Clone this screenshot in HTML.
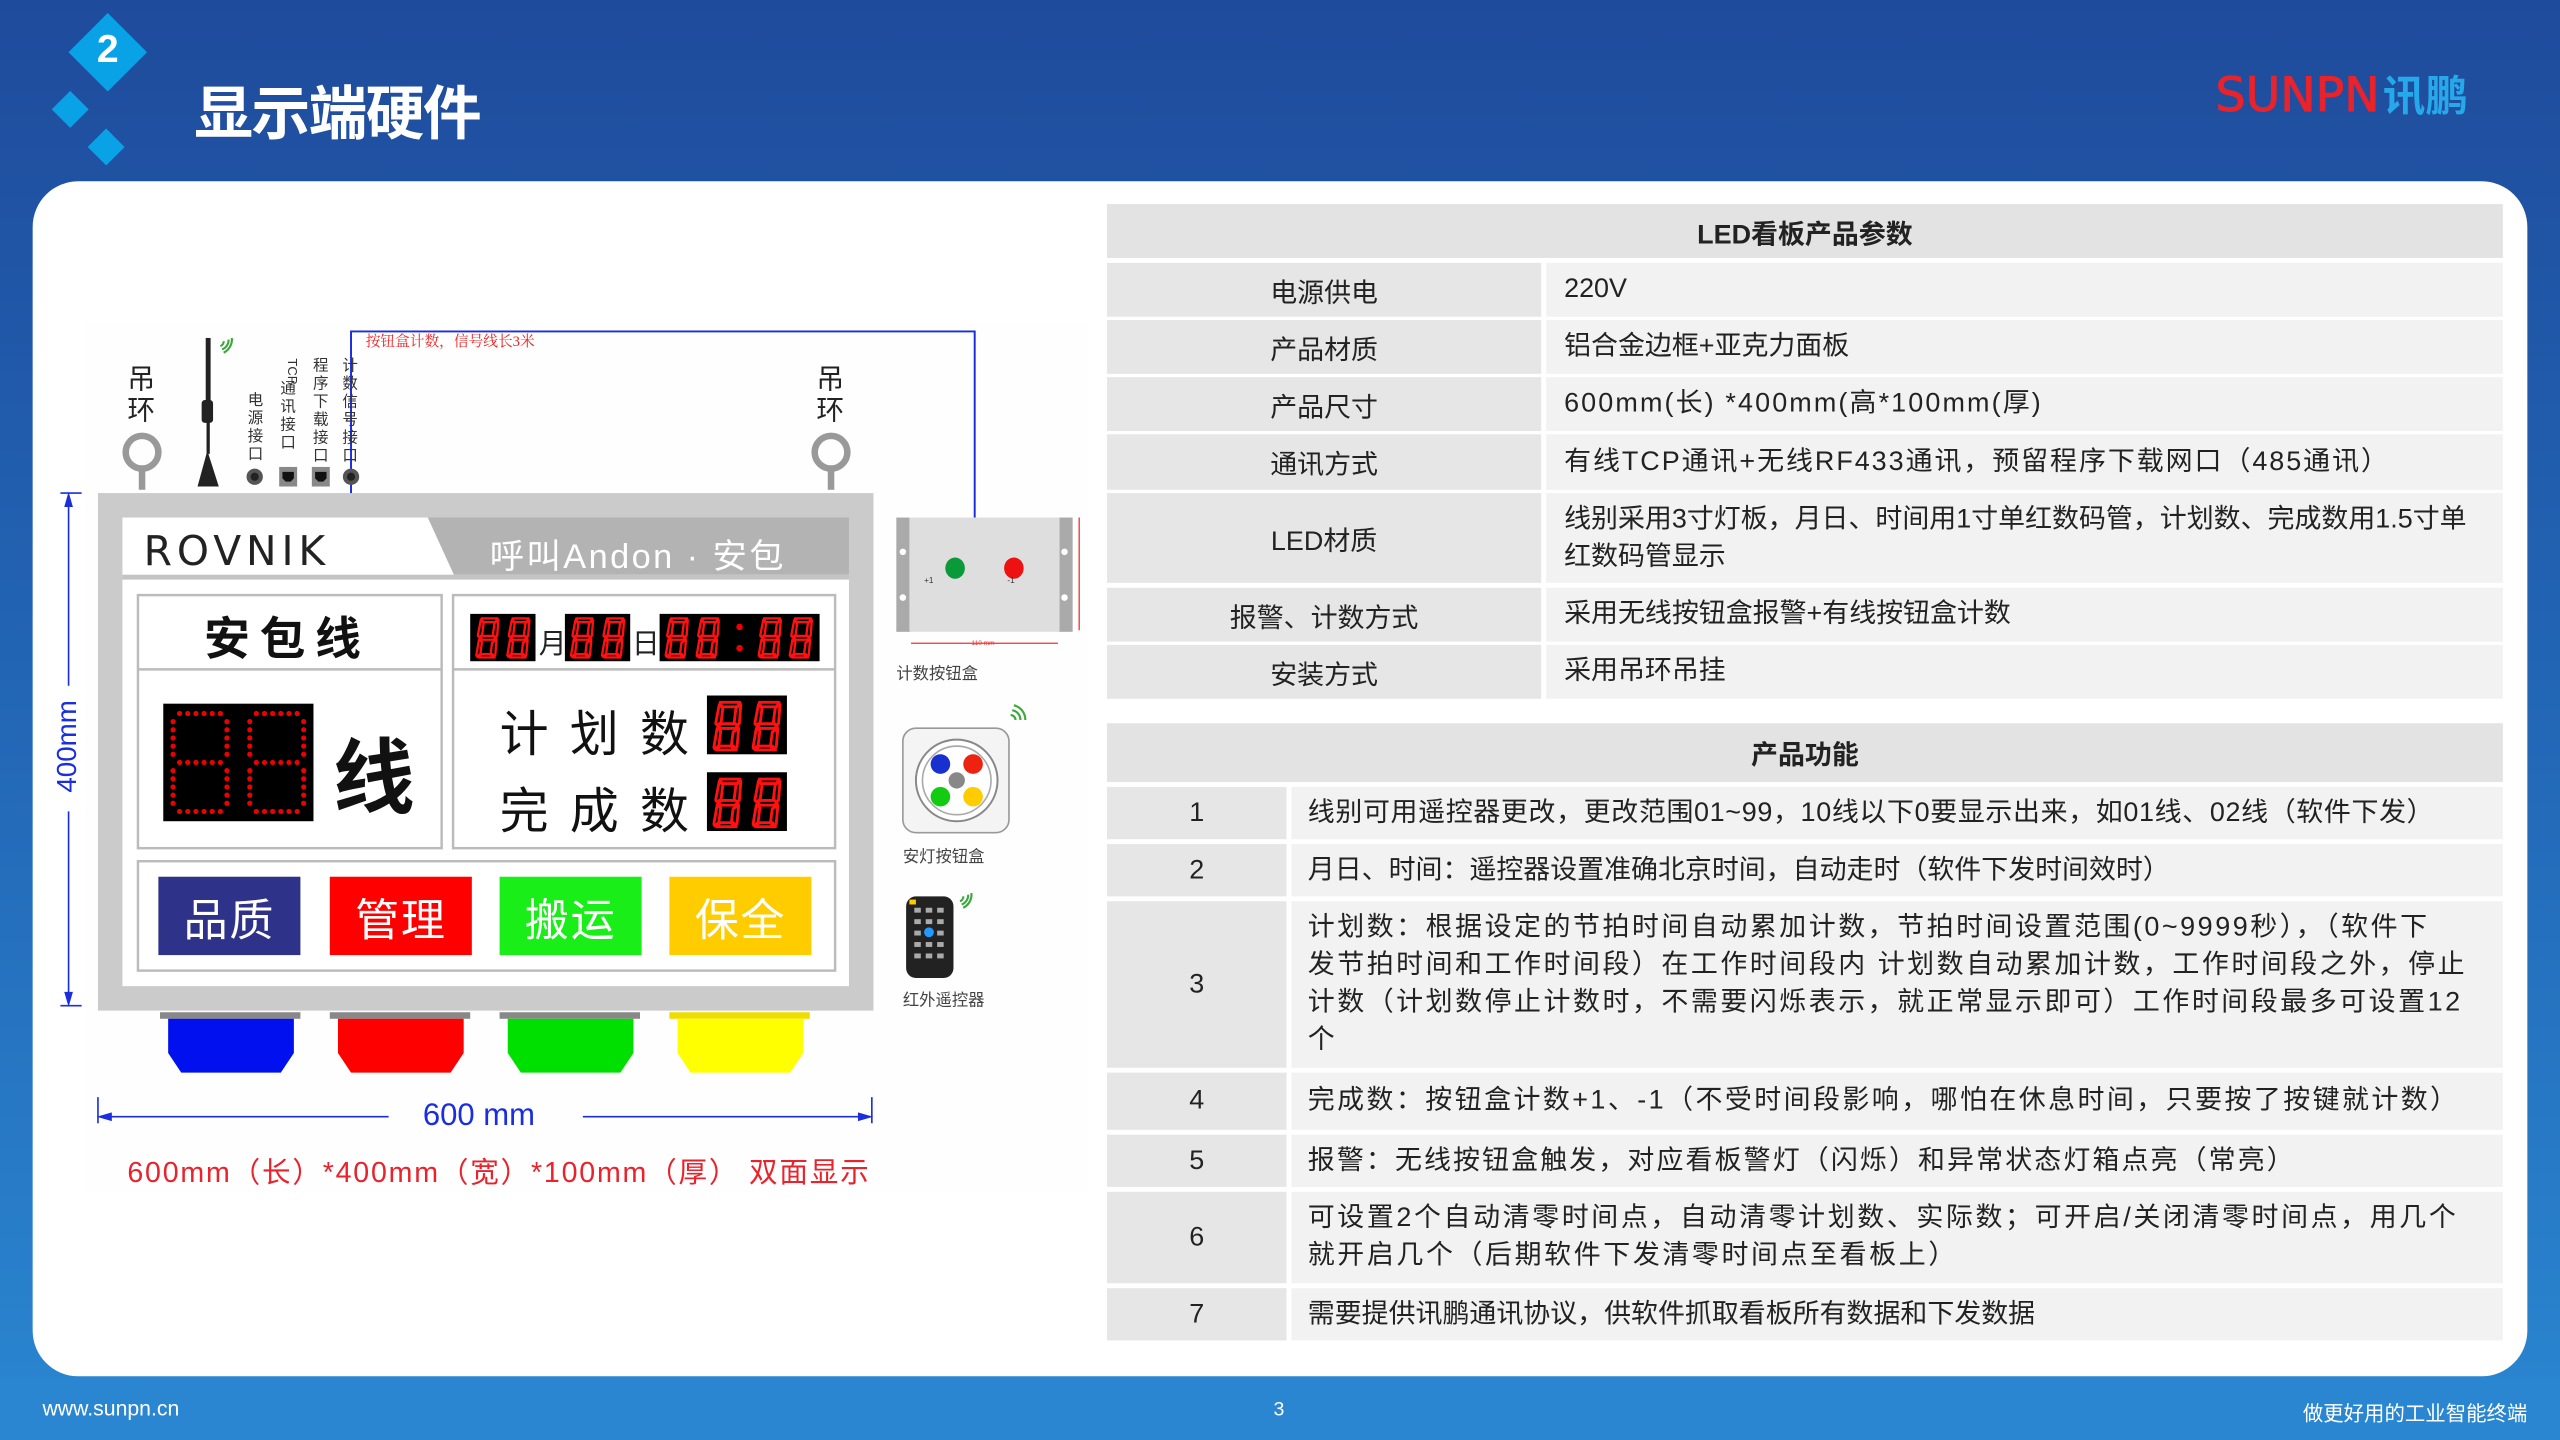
<!DOCTYPE html>
<html><head><meta charset="utf-8"><style>
*{margin:0;padding:0;box-sizing:border-box}
html,body{width:2560px;height:1440px;overflow:hidden;background:#2a86d0}
#w{position:absolute;left:0;top:0;width:1568px;height:882px;transform:scale(1.632653);transform-origin:0 0;font-family:"Liberation Sans","Noto Sans CJK SC",sans-serif;background:linear-gradient(180deg,#1f4b9c 0%,#2264b4 45%,#2a86d0 100%)}
.a{position:absolute}
.card{left:20px;top:111px;width:1528px;height:732px;background:#fff;border-radius:28px}
.foot{left:0;top:843px;width:1568px;height:39px;background:#2a86d0}
.dia{background:#0aa2e6;transform:rotate(45deg)}
.tb{position:absolute;left:678px;width:855px;font-size:16.5px;color:#222}
.r{position:absolute;left:0;width:855px;display:flex}
.lc{background:#e6e6e6;display:flex;align-items:center;justify-content:center}
.vc{background:#f2f2f2;margin-left:3px;flex:1;display:flex;align-items:center;line-height:23px;white-space:nowrap}
.hd{background:#e3e3e3;font-weight:bold;justify-content:center;align-items:center;font-size:16.5px}
.vt{position:absolute;font-size:9.5px;color:#333;width:11px;line-height:11px;text-align:center}
.btn{position:absolute;top:537px;width:87px;height:48px;color:#fff;font-size:27px;display:flex;align-items:center;justify-content:center;letter-spacing:1px}
.lab{position:absolute;font-size:10px;color:#444}
</style></head><body><div id="w">
<svg width="0" height="0" style="position:absolute"><defs>
<symbol id="d" viewBox="0 0 20 30"><g fill="none" stroke="#f11" stroke-width="1.6" stroke-linejoin="round"><path d="M6 2h11l-1.5 2.5h-8.5z"/><path d="M5.5 3.2l2 2-1 8-2.2 1.5-0.8-1z"/><path d="M17.5 3.2l-0.8 10.5-1.3 1 -1.6-1.5 1-8z"/><path d="M4.8 15.2l2-1.3h7.4l1.8 1.3-2 1.3h-7.4z"/><path d="M4.3 16.5l2 1.5-1 8-2.3 2-0.5-1z"/><path d="M16.3 16.5l-0.9 10.5-1.7 1-1.5-1.5 1-8z"/><path d="M4 28.5l2-2.2h7.5l1.5 2.2z"/></g></symbol>
</defs></svg>
<div class="a card"></div>
<div class="a foot"></div>
<div class="a dia" style="left:49px;top:15px;width:34px;height:34px"></div>
<div class="a" style="top:17px;color:#fff;font-weight:bold;font-size:24px;left:49px;width:34px;text-align:center">2</div>
<div class="a dia" style="left:35px;top:59px;width:16px;height:16px"></div>
<div class="a dia" style="left:57px;top:82px;width:16px;height:16px"></div>
<div class="a" style="left:119px;top:41px;color:#fff;font-size:36px;font-weight:bold;letter-spacing:-1px">显示端硬件</div>
<div class="a" style="left:1357px;top:41px;font-size:29px;line-height:34px;font-family:'DejaVu Sans','Liberation Sans',sans-serif;color:#e8232c;-webkit-text-stroke:0.6px #e8232c">SUNPN<span style="color:#26a9ea;font-family:'Noto Sans CJK SC',sans-serif;font-size:26px;font-weight:bold;-webkit-text-stroke:0;margin-left:2px">讯鹏</span></div>
<div class="a" style="left:26px;top:855px;color:#fff;font-size:13px">www.sunpn.cn</div>
<div class="a" style="left:780px;top:856px;color:#fff;font-size:12px">3</div>
<div class="a" style="left:1400px;top:855px;width:148px;text-align:right;color:#fff;font-size:12.5px">做更好用的工业智能终端</div>

<div class="tb" style="top:0">
<div class="r hd" style="top:125px;height:33px">LED看板产品参数</div>
<div class="r" style="top:161px;height:33px"><div class="lc" style="width:266px">电源供电</div><div class="vc" style="padding-left:11px">220V</div></div>
<div class="r" style="top:196px;height:33px"><div class="lc" style="width:266px">产品材质</div><div class="vc" style="padding-left:11px">铝合金边框+亚克力面板</div></div>
<div class="r" style="top:231px;height:33px"><div class="lc" style="width:266px">产品尺寸</div><div class="vc" style="padding-left:11px;letter-spacing:1.3px">600mm(长) *400mm(高*100mm(厚)</div></div>
<div class="r" style="top:266px;height:34px"><div class="lc" style="width:266px">通讯方式</div><div class="vc" style="padding-left:11px;letter-spacing:1.2px">有线TCP通讯+无线RF433通讯，预留程序下载网口（485通讯）</div></div>
<div class="r" style="top:302px;height:55px"><div class="lc" style="width:266px">LED材质</div><div class="vc" style="padding-left:11px">线别采用3寸灯板，月日、时间用1寸单红数码管，计划数、完成数用1.5寸单<br>红数码管显示</div></div>
<div class="r" style="top:360px;height:33px"><div class="lc" style="width:266px">报警、计数方式</div><div class="vc" style="padding-left:11px">采用无线按钮盒报警+有线按钮盒计数</div></div>
<div class="r" style="top:395px;height:33px"><div class="lc" style="width:266px">安装方式</div><div class="vc" style="padding-left:11px">采用吊环吊挂</div></div>
<div class="r hd" style="top:443px;height:36px">产品功能</div>
<div class="r" style="top:482px;height:32px"><div class="lc" style="width:110px">1</div><div class="vc" style="padding-left:10px;letter-spacing:0.4px">线别可用遥控器更改，更改范围01~99，10线以下0要显示出来，如01线、02线（软件下发）</div></div>
<div class="r" style="top:517px;height:32px"><div class="lc" style="width:110px">2</div><div class="vc" style="padding-left:10px">月日、时间：遥控器设置准确北京时间，自动走时（软件下发时间效时）</div></div>
<div class="r" style="top:552px;height:102px"><div class="lc" style="width:110px">3</div><div class="vc" style="padding-left:10px;letter-spacing:1.55px"><div>计划数：根据设定的节拍时间自动累加计数，节拍时间设置范围(0~9999秒），（软件下<br>发节拍时间和工作时间段）在工作时间段内 计划数自动累加计数，工作时间段之外，停止<br>计数（计划数停止计数时，不需要闪烁表示，就正常显示即可）工作时间段最多可设置12<br>个</div></div></div>
<div class="r" style="top:657px;height:35px"><div class="lc" style="width:110px">4</div><div class="vc" style="padding-left:10px;letter-spacing:1.5px">完成数：按钮盒计数+1、-1（不受时间段影响，哪怕在休息时间，只要按了按键就计数）</div></div>
<div class="r" style="top:695px;height:32px"><div class="lc" style="width:110px">5</div><div class="vc" style="padding-left:10px;letter-spacing:1.3px">报警：无线按钮盒触发，对应看板警灯（闪烁）和异常状态灯箱点亮（常亮）</div></div>
<div class="r" style="top:730px;height:56px"><div class="lc" style="width:110px">6</div><div class="vc" style="padding-left:10px;letter-spacing:1.6px"><div>可设置2个自动清零时间点，自动清零计划数、实际数；可开启/关闭清零时间点，用几个<br>就开启几个（后期软件下发清零时间点至看板上）</div></div></div>
<div class="r" style="top:789px;height:32px"><div class="lc" style="width:110px">7</div><div class="vc" style="padding-left:10px">需要提供讯鹏通讯协议，供软件抓取看板所有数据和下发数据</div></div>
</div>

<div class="a" style="left:52px;top:198px;width:614px;height:532px;background:#fefefe"></div>
<svg class="a" style="left:0;top:0" width="700" height="740">
<path d="M215 318V203H597V317" fill="none" stroke="#1a2ee0" stroke-width="1.2"/>
<circle cx="87" cy="277" r="10" fill="none" stroke="#999" stroke-width="4"/><rect x="85" y="286" width="4" height="14" fill="#999"/>
<circle cx="509" cy="277" r="10" fill="none" stroke="#999" stroke-width="4"/><rect x="507" y="286" width="4" height="14" fill="#999"/>
<rect x="126" y="207" width="3" height="40" fill="#222"/><rect x="123.5" y="245" width="7" height="14" rx="2" fill="#222"/><rect x="126.5" y="258" width="2" height="20" fill="#222"/><path d="M127 276 L121 298 H134 Z" fill="#222"/>
<g fill="none" stroke="#3aa83a" stroke-width="1.3"><path d="M135 212a3 3 0 0 0 2-3"/><path d="M136 214a6 6 0 0 0 4-6"/><path d="M137 216a9 9 0 0 0 5-9"/></g>
<circle cx="156" cy="292" r="5" fill="#555"/><circle cx="156" cy="292" r="2.5" fill="#222"/>
<rect x="171" y="286" width="11" height="12" fill="#888"/><path d="M173 289h7v4l-2 2h-3l-2-2z" fill="#111"/>
<rect x="191" y="286" width="11" height="12" fill="#888"/><path d="M193 289h7v4l-2 2h-3l-2-2z" fill="#111"/>
<circle cx="215" cy="292" r="5" fill="#555"/><circle cx="215" cy="292" r="2.5" fill="#222"/>
<rect x="60" y="302" width="475" height="317" fill="#cbcbcb"/>
<rect x="75" y="317" width="445" height="287" fill="#fff"/>
<path d="M262 317H520V352H278Z" fill="#b3b3b3"/>
<rect x="75" y="352" width="445" height="3" fill="#c4c4c4"/>
<rect x="84.5" y="364.5" width="186" height="155" fill="none" stroke="#bbb" stroke-width="1.5"/>
<line x1="85" y1="410" x2="270" y2="410" stroke="#bbb" stroke-width="1.5"/>
<rect x="277.5" y="364.5" width="234" height="155" fill="none" stroke="#bbb" stroke-width="1.5"/>
<line x1="278" y1="410" x2="511" y2="410" stroke="#bbb" stroke-width="1.5"/>
<rect x="84.5" y="527.5" width="427" height="67" fill="none" stroke="#bbb" stroke-width="1.5"/>
<rect x="98" y="620" width="86" height="4" fill="#888"/><path d="M103 624H180V645L172 657H111L103 645Z" fill="#0010ee"/>
<rect x="202" y="620" width="86" height="4" fill="#888"/><path d="M207 624H284V645L276 657H215L207 645Z" fill="#ff0000"/>
<rect x="306" y="620" width="86" height="4" fill="#888"/><path d="M311 624H388V645L380 657H319L311 645Z" fill="#00e000"/>
<rect x="410" y="620" width="86" height="4" fill="#eedd00"/><path d="M415 624H492V645L484 657H423L415 645Z" fill="#ffff00"/>
<g stroke="#1a2ee0" stroke-width="1" fill="#1a2ee0">
<line x1="37" y1="302" x2="50" y2="302"/><line x1="37" y1="616" x2="50" y2="616"/>
<line x1="42" y1="304" x2="42" y2="420"/><line x1="42" y1="497" x2="42" y2="614"/>
<path d="M42 303l-2 7h4z"/><path d="M42 615l-2-7h4z"/>
<line x1="60" y1="672" x2="60" y2="688"/><line x1="534" y1="672" x2="534" y2="688"/>
<line x1="61" y1="684" x2="238" y2="684"/><line x1="357" y1="684" x2="533" y2="684"/>
<path d="M61 684l7-2v4z"/><path d="M533 684l-7-2v4z"/>
</g>
<rect x="549" y="317" width="9" height="70" fill="#aaa"/><rect x="648" y="317" width="9" height="70" fill="#aaa"/>
<rect x="557" y="317" width="92" height="70" fill="#dedede"/>
<circle cx="553" cy="338" r="2" fill="#fff"/><circle cx="553" cy="366" r="2" fill="#fff"/><circle cx="652" cy="338" r="2" fill="#fff"/><circle cx="652" cy="366" r="2" fill="#fff"/>
<ellipse cx="585" cy="348" rx="6" ry="6.5" fill="#0a9a3a"/><ellipse cx="621" cy="348" rx="6" ry="6.5" fill="#ee1111"/>
<line x1="558" y1="394" x2="648" y2="394" stroke="#e33" stroke-width="0.8"/>
<line x1="661" y1="317" x2="661" y2="386" stroke="#e33" stroke-width="0.8"/>
<rect x="553" y="446" width="65" height="64" rx="8" fill="#f4f4f4" stroke="#999"/>
<circle cx="586" cy="478" r="25" fill="#fff" stroke="#888" stroke-width="1.2"/><circle cx="586" cy="478" r="21" fill="none" stroke="#aaa"/>
<circle cx="576" cy="468" r="6" fill="#1930d0"/><circle cx="596" cy="468" r="6" fill="#e21"/><circle cx="576" cy="488" r="6" fill="#1c1"/><circle cx="596" cy="488" r="6" fill="#fc0"/><circle cx="586" cy="478" r="5" fill="#888"/>
<g fill="none" stroke="#3aa83a" stroke-width="1.3"><path d="M619 438a3 3 0 0 1 3 3"/><path d="M620 435a6 6 0 0 1 5 6"/><path d="M621 432a9 9 0 0 1 7 9"/></g>
<rect x="555" y="549" width="29" height="50" rx="6" fill="#222"/>
<g fill="#aaa"><rect x="560" y="556" width="4" height="3"/><rect x="567" y="556" width="4" height="3"/><rect x="574" y="556" width="4" height="3"/><rect x="560" y="563" width="4" height="3"/><rect x="567" y="563" width="4" height="3"/><rect x="574" y="563" width="4" height="3"/><rect x="560" y="570" width="4" height="3"/><rect x="574" y="570" width="4" height="3"/><rect x="560" y="577" width="4" height="3"/><rect x="567" y="577" width="4" height="3"/><rect x="574" y="577" width="4" height="3"/><rect x="560" y="584" width="4" height="3"/><rect x="567" y="584" width="4" height="3"/><rect x="574" y="584" width="4" height="3"/></g>
<circle cx="569" cy="571" r="3" fill="#29f"/><rect x="557" y="551" width="4" height="3" fill="#fc0"/>
<g fill="none" stroke="#3aa83a" stroke-width="1.3"><path d="M588 552a3 3 0 0 0 2-3"/><path d="M589 554a6 6 0 0 0 4-6"/><path d="M590 556a9 9 0 0 0 5-9"/></g>
<rect x="100" y="431" width="92" height="72" fill="#000"/>
<g fill="#e00">
<g id="dm">
<circle cx="110" cy="437" r="1.6"/><circle cx="115" cy="437" r="1.6"/><circle cx="120" cy="437" r="1.6"/><circle cx="125" cy="437" r="1.6"/><circle cx="130" cy="437" r="1.6"/><circle cx="135" cy="437" r="1.6"/>
<circle cx="110" cy="467" r="1.6"/><circle cx="115" cy="467" r="1.6"/><circle cx="120" cy="467" r="1.6"/><circle cx="125" cy="467" r="1.6"/><circle cx="130" cy="467" r="1.6"/><circle cx="135" cy="467" r="1.6"/>
<circle cx="110" cy="497" r="1.6"/><circle cx="115" cy="497" r="1.6"/><circle cx="120" cy="497" r="1.6"/><circle cx="125" cy="497" r="1.6"/><circle cx="130" cy="497" r="1.6"/><circle cx="135" cy="497" r="1.6"/>
<circle cx="106" cy="442" r="1.6"/><circle cx="106" cy="447" r="1.6"/><circle cx="106" cy="452" r="1.6"/><circle cx="106" cy="457" r="1.6"/><circle cx="106" cy="462" r="1.6"/>
<circle cx="106" cy="472" r="1.6"/><circle cx="106" cy="477" r="1.6"/><circle cx="106" cy="482" r="1.6"/><circle cx="106" cy="487" r="1.6"/><circle cx="106" cy="492" r="1.6"/>
<circle cx="139" cy="442" r="1.6"/><circle cx="139" cy="447" r="1.6"/><circle cx="139" cy="452" r="1.6"/><circle cx="139" cy="457" r="1.6"/><circle cx="139" cy="462" r="1.6"/>
<circle cx="139" cy="472" r="1.6"/><circle cx="139" cy="477" r="1.6"/><circle cx="139" cy="482" r="1.6"/><circle cx="139" cy="487" r="1.6"/><circle cx="139" cy="492" r="1.6"/>
</g>
<use href="#dm" x="47"/>
</g>
<rect x="288" y="376" width="40" height="29" fill="#000"/>
<use href="#d" x="289" y="377" width="19" height="27"/><use href="#d" x="308" y="377" width="19" height="27"/>
<rect x="346" y="376" width="40" height="29" fill="#000"/>
<use href="#d" x="347" y="377" width="19" height="27"/><use href="#d" x="366" y="377" width="19" height="27"/>
<rect x="404" y="376" width="98" height="29" fill="#000"/>
<use href="#d" x="405" y="377" width="19" height="27"/><use href="#d" x="424" y="377" width="19" height="27"/>
<circle cx="453" cy="384" r="2" fill="#e00"/><circle cx="453" cy="397" r="2" fill="#e00"/>
<use href="#d" x="462" y="377" width="19" height="27"/><use href="#d" x="481" y="377" width="19" height="27"/>
<rect x="433" y="426" width="49" height="36" fill="#000"/>
<use href="#d" x="434" y="428" width="23" height="33"/><use href="#d" x="458" y="428" width="23" height="33"/>
<rect x="433" y="473" width="49" height="36" fill="#000"/>
<use href="#d" x="434" y="475" width="23" height="33"/><use href="#d" x="458" y="475" width="23" height="33"/>
</svg>
<div class="a" style="left:224px;top:202px;font-size:9px;color:#e22;font-family:'Liberation Serif','Noto Serif CJK SC',serif">按钮盒计数，信号线长3米</div>
<div class="a" style="left:78px;top:223px;width:18px;font-size:17px;line-height:19px;color:#222">吊环</div>
<div class="a" style="left:500px;top:223px;width:18px;font-size:17px;line-height:19px;color:#222">吊环</div>
<div class="vt" style="left:151px;top:240px">电源接口</div>
<div class="vt" style="left:171px;top:222px"><span style="display:inline-block;transform:rotate(90deg);font-size:8px">TCP</span><br>通讯接口</div>
<div class="vt" style="left:191px;top:219px">程序下载接口</div>
<div class="vt" style="left:209px;top:219px">计数信号接口</div>
<div class="a" style="left:88px;top:323px;font-size:25px;letter-spacing:3px;color:#222;font-family:'DejaVu Sans',sans-serif">ROVNIK</div>
<div class="a" style="left:300px;top:325px;font-size:21px;letter-spacing:1.5px;color:#fff">呼叫Andon · 安包</div>
<div class="a" style="left:125px;top:370px;font-size:28px;font-weight:bold;letter-spacing:6px;color:#111">安包线</div>
<div class="a" style="left:204px;top:437px;font-size:50px;font-weight:bold;color:#111">线</div>
<div class="a" style="left:330px;top:380px;font-size:17px;color:#222">月</div>
<div class="a" style="left:387px;top:380px;font-size:17px;color:#222">日</div>
<div class="a" style="left:306px;top:425px;font-size:30px;letter-spacing:13px;color:#111">计划数</div>
<div class="a" style="left:306px;top:472px;font-size:30px;letter-spacing:13px;color:#111">完成数</div>
<div class="btn" style="left:97px;background:#2e3289">品质</div>
<div class="btn" style="left:202px;background:#ff0000">管理</div>
<div class="btn" style="left:306px;background:#19ee19">搬运</div>
<div class="btn" style="left:410px;background:#ffcc00">保全</div>
<div class="a" style="left:14px;top:448px;font-size:17px;color:#1a2ee0;transform:rotate(-90deg);transform-origin:center;width:55px;text-align:center">400mm</div>
<div class="a" style="left:259px;top:673px;font-size:19px;color:#1a2ee0">600 mm</div>
<div class="a" style="left:78px;top:705px;font-size:17.5px;color:#e8232c;letter-spacing:1.1px;white-space:nowrap">600mm（长）*400mm（宽）*100mm（厚） 双面显示</div>
<div class="a" style="left:595px;top:391px;font-size:4px;color:#e33">110 mm</div>
<div class="lab" style="left:549px;top:404px">计数按钮盒</div>
<div class="lab" style="left:553px;top:516px">安灯按钮盒</div>
<div class="lab" style="left:553px;top:604px">红外遥控器</div>
<div class="a" style="left:566px;top:353px;font-size:5px;color:#333">+1</div>
<div class="a" style="left:617px;top:353px;font-size:5px;color:#333">-1</div>
</div></body></html>
